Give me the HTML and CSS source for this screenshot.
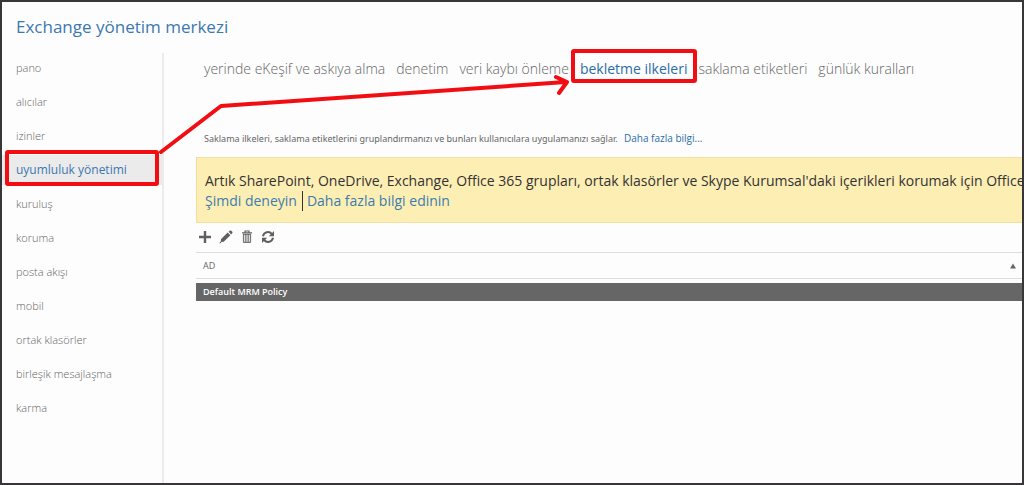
FILE: index.html
```html
<!DOCTYPE html>
<html lang="tr">
<head>
<meta charset="utf-8">
<meta name="viewport" content="width=device-width, initial-scale=1">
<title>Exchange yönetim merkezi</title>
<link rel="stylesheet" href="styles.css">
</head>
<body>
<div class="frame">
  <header class="page-header"><h1 class="page-title">Exchange yönetim merkezi</h1></header>
  <div class="layout">
    <nav class="sidebar" aria-label="Özellikler">
      <a class="nav-item" href="#">pano</a>
      <a class="nav-item" href="#">alıcılar</a>
      <a class="nav-item" href="#">izinler</a>
      <a class="nav-item nav-item-active" href="#" aria-current="page">uyumluluk yönetimi</a>
      <a class="nav-item" href="#">kuruluş</a>
      <a class="nav-item" href="#">koruma</a>
      <a class="nav-item" href="#">posta akışı</a>
      <a class="nav-item" href="#">mobil</a>
      <a class="nav-item" href="#">ortak klasörler</a>
      <a class="nav-item" href="#">birleşik mesajlaşma</a>
      <a class="nav-item" href="#">karma</a>
    </nav>
    <main class="content">
      <nav class="tabs" aria-label="Sekmeler">
        <a class="tab" href="#">yerinde eKeşif ve askıya alma</a>
        <a class="tab" href="#">denetim</a>
        <a class="tab" href="#">veri kaybı önleme</a>
        <a class="tab tab-active" href="#" aria-current="page">bekletme ilkeleri</a>
        <a class="tab" href="#">saklama etiketleri</a>
        <a class="tab" href="#">günlük kuralları</a>
      </nav>
      <p class="intro">Saklama ilkeleri, saklama etiketlerini gruplandırmanızı ve bunları kullanıcılara uygulamanızı sağlar. <a class="intro-link" href="#">Daha fazla bilgi...</a></p>
      <section class="banner">
        <p class="banner-text">Artık SharePoint, OneDrive, Exchange, Office 365 grupları, ortak klasörler ve Skype Kurumsal'daki içerikleri korumak için Office</p>
        <div class="banner-links"><a class="banner-link" href="#">Şimdi deneyin</a><a class="banner-link banner-link-next" href="#">Daha fazla bilgi edinin</a></div>
      </section>
      <div class="toolbar">
        <button class="tool" type="button" aria-label="Yeni"><svg class="icon" viewBox="0 0 14 14"><path d="M7 1v12M1 7h12" fill="none" stroke="currentColor" stroke-width="2.4"/></svg></button>
        <button class="tool" type="button" aria-label="Düzenle"><svg class="icon" viewBox="0 0 14 14"><path d="M8.7 2.6l2.7 2.7-6.7 6.4-3 .2L2.1 9zM9.6 1.8L11 .6q.6-.4 1.2.1l1.1 1.1q.5.6 0 1.2l-1.1 1.4zM.4 13.5l.7-2.1 1.4 1.4z" fill="currentColor"/></svg></button>
        <button class="tool" type="button" aria-label="Sil"><svg class="icon" viewBox="0 0 14 14"><path d="M5 2.2V1h4v1.2M2 2.8h10" fill="none" stroke="currentColor" stroke-width="1.2"/><path d="M3 4.4h8V12q0 1-1 1H4q-1 0-1-1z" fill="currentColor" fill-opacity=".2"/><path d="M3.4 4.2v8.2h7.2V4.2M5.8 4.2v8M8.2 4.2v8M3 4.4h8" fill="none" stroke="currentColor" stroke-width=".9"/></svg></button>
        <button class="tool" type="button" aria-label="Yenile"><svg class="icon" viewBox="0 0 14 14"><path d="M2 6.2A5 5 0 0 1 10.8 4M12 7.8A5 5 0 0 1 3.2 10" fill="none" stroke="currentColor" stroke-width="2"/><path d="M13 1v5.3H7.8zM1 13V7.7h5.2z" fill="currentColor"/></svg></button>
      </div>
      <table class="grid">
        <thead><tr><th class="grid-head" scope="col"><span class="head-inner">AD<svg class="sort" viewBox="0 0 6 6"><path d="M3 .5L6 5.5H0z" fill="currentColor"/></svg></span></th></tr></thead>
        <tbody><tr><td class="grid-row">Default MRM Policy</td></tr></tbody>
      </table>
    </main>
  </div>
  <svg class="annotations" aria-hidden="true">
    <rect x="7" y="152" width="150" height="32" rx="1"/>
    <rect x="573" y="51" width="122" height="30" rx="1"/>
    <path d="M161 152L221 106L566 82M556 77L567 82L559 93"/>
  </svg>
</div>
</body>
</html>
```

FILE: styles.css
```css
* {
  box-sizing: border-box;
}

body {
  margin: 0;
  font-family: "Open Sans", "Noto Sans", sans-serif;
  color: #666;
}

a {
  color: inherit;
  text-decoration: none;
}

.frame {
  position: relative;
  display: flex;
  flex-direction: column;
  min-height: 100vh;
  border: 2px solid #383638;
  background: #fdfdfd;
  overflow: hidden;
}

.page-header {
  padding: 12px 14px 0;
}

.page-title {
  margin: 0;
  font-size: 17px;
  line-height: 26px;
  font-weight: 400;
  color: #3c78b0;
}

.layout {
  display: flex;
  flex: 1;
  padding-top: 13px;
}

.sidebar {
  display: flex;
  flex: 0 0 162px;
  flex-direction: column;
  gap: 4px;
  border-right: 2px solid #ececec;
}

.nav-item {
  padding: 0 14px;
  font-size: 11px;
  line-height: 30px;
  font-weight: 300;
}

.nav-item-active {
  background: #ebebeb;
  color: #3c78b0;
  font-size: 12px;
  font-weight: 400;
}

.content {
  flex: 1;
  min-width: 0;
  padding-left: 32px;
}

.tabs {
  display: flex;
  gap: 11px;
  padding: 4px 8px 0;
  font-size: 14px;
  line-height: 24px;
  font-weight: 300;
  white-space: nowrap;
}

.tab-active {
  color: #2a6ca8;
  font-weight: 400;
}

.intro {
  margin: 47px 8px 8px;
  font-family: "Noto Sans", "Open Sans", sans-serif;
  font-size: 9px;
  line-height: 20px;
}

.intro-link {
  margin-left: 4px;
  color: #2a6ca8;
  font-family: "Open Sans", "Noto Sans", sans-serif;
  font-size: 10px;
}

.banner {
  padding: 13px 0 11px 8px;
  border: 1px solid #f0dfa0;
  border-right: 0;
  background: #fdeeb3;
  font-size: 14px;
  line-height: 20px;
  white-space: nowrap;
}

.banner-text {
  margin: 0;
  color: #333;
}

.banner-links {
  display: flex;
}

.banner-link {
  color: #3c7cb0;
}

.banner-link-next {
  margin-left: 5px;
  padding-left: 4px;
  border-left: 1px solid #333;
}

.toolbar {
  display: flex;
  gap: 7px;
  padding: 7px 2px 8px;
}

.tool {
  display: block;
  padding: 0;
  border: 0;
  background: none;
  color: #606060;
}

.icon {
  display: block;
  width: 14px;
  height: 14px;
}

.grid {
  width: 100%;
  border-collapse: separate;
  border-spacing: 0;
}

.grid-head {
  padding: 0 6px 0 7px;
  border-top: 1px solid #ddd;
  border-bottom: 1px solid #ddd;
  font-size: 9px;
  line-height: 25px;
  font-weight: 400;
  text-align: left;
}

.head-inner {
  display: flex;
  align-items: center;
  justify-content: space-between;
}

.sort {
  width: 6px;
  height: 6px;
}

.grid-row {
  padding: 0 7px;
  border-top: 4px solid #fdfdfd;
  background: #666;
  background-clip: padding-box;
  color: #fff;
  font-size: 9px;
  line-height: 18px;
  font-weight: 600;
}

.annotations {
  position: absolute;
  top: -2px;
  left: -2px;
  width: 100%;
  height: 100%;
  fill: none;
  stroke: #f20d12;
  stroke-width: 4;
  stroke-linejoin: round;
  stroke-linecap: round;
  pointer-events: none;
}
```
